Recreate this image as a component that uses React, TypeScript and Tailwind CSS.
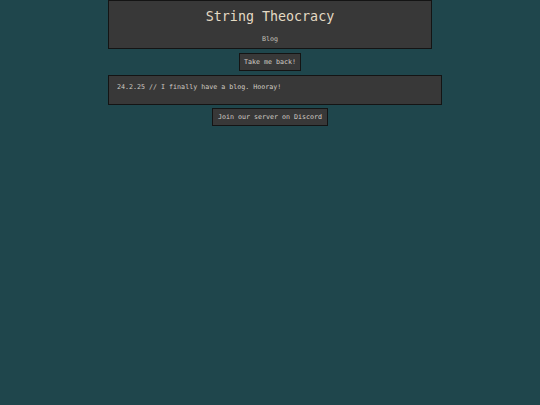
export default function App() {
  return (
    <div className="min-h-[405px] w-[540px] bg-[#1f464c] font-['DejaVu_Sans_Mono',monospace]">
      <div className="ml-[108px] flex w-[324px] flex-col items-center">
        <div className="flex h-[49px] w-full flex-col items-center border border-[#141414] bg-[#383838]">
          <div className="mt-[8px] text-[13.33px] leading-[16px] text-[#e4dac4]">String Theocracy</div>
          <div className="mt-[10px] text-[6.67px] leading-[8px] text-[#c4c0b8]">Blog</div>
        </div>
        <div className="mt-[4px] flex h-[18px] items-center border border-[#141414] bg-[#383838] px-[4px] text-[6.67px] leading-[8px] text-[#d0ccc4]">
          Take me back!
        </div>
        <div className="mt-[4px] h-[30px] w-[334px] self-start border border-[#141414] bg-[#383838] px-[8px] pt-[7px] text-[6.67px] leading-[8px] text-[#d0ccc4]">
          24.2.25 // I finally have a blog. Hooray!
        </div>
        <div className="mt-[3px] flex h-[18px] items-center border border-[#141414] bg-[#383838] px-[5px] text-[6.67px] leading-[8px] text-[#d0ccc4]">
          Join our server on Discord
        </div>
      </div>
    </div>
  );
}
